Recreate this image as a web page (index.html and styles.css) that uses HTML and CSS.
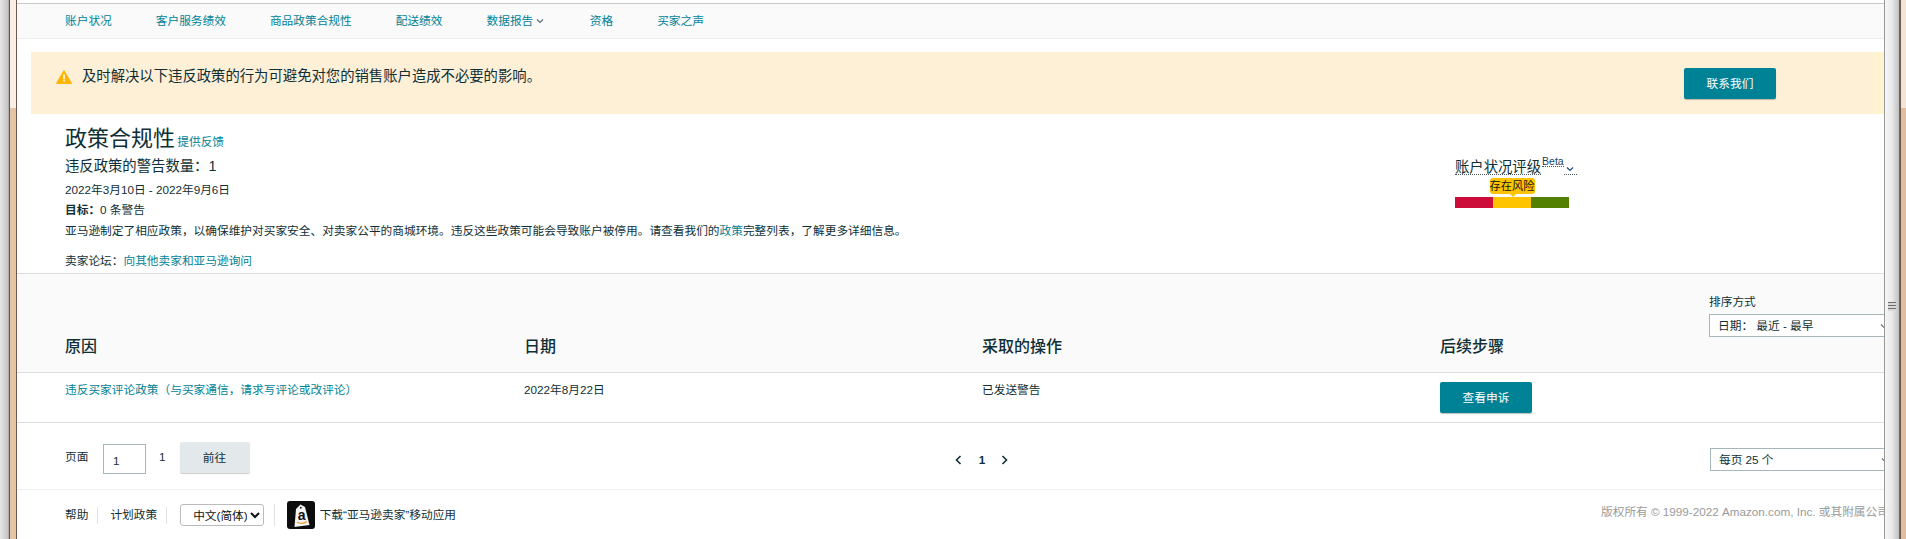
FILE: index.html
```html
<!DOCTYPE html>
<html lang="zh-CN">
<head>
<meta charset="utf-8">
<title>政策合规性</title>
<link rel="stylesheet" href="styles.css">
</head>
<body>
<div class="window">
  <div class="edge-left"><div class="edge-left-tint"></div></div>
  <main class="main">
    <nav class="nav">
      <a class="nav-link">账户状况</a>
      <a class="nav-link">客户服务绩效</a>
      <a class="nav-link">商品政策合规性</a>
      <a class="nav-link">配送绩效</a>
      <a class="nav-link nav-caret-link">数据报告<svg class="nav-caret" width="8" height="6" viewBox="0 0 8 6"><path d="M1 1.5 4 4.5 7 1.5" fill="none" stroke="#5b6f75" stroke-width="1.2"/></svg></a>
      <a class="nav-link">资格</a>
      <a class="nav-link">买家之声</a>
    </nav>

    <section class="banner">
      <svg class="banner-icon" width="16" height="14" viewBox="0 0 16 14"><path d="M8 .6 15.5 13.4H.5Z" fill="#ffb400" stroke="#ffb400" stroke-linejoin="round"/><rect x="7.2" y="4.4" width="1.6" height="5" fill="#fff"/><rect x="7.2" y="10.2" width="1.6" height="1.6" fill="#fff"/></svg>
      <p class="banner-text">及时解决以下违反政策的行为可避免对您的销售账户造成不必要的影响。</p>
      <button class="btn btn-contact">联系我们</button>
    </section>

    <section class="summary">
      <div class="summary-left">
        <div class="title-line"><h1 class="title">政策合规性</h1> <a class="link">提供反馈</a></div>
        <p class="count">违反政策的警告数量：1</p>
        <p class="date-range">2022年3月10日 - 2022年9月6日</p>
        <p class="goal"><b>目标：</b>0 条警告</p>
        <p class="desc">亚马逊制定了相应政策，以确保维护对买家安全、对卖家公平的商城环境。违反这些政策可能会导致账户被停用。请查看我们的<a class="link">政策</a>完整列表，了解更多详细信息。</p>
        <p class="forum">卖家论坛：<a class="link">向其他卖家和亚马逊询问</a></p>
      </div>
      <div class="health">
        <div class="health-title"><span class="health-name">账户状况评级</span><sup class="health-beta">Beta</sup><span class="health-more"><svg width="8" height="6" viewBox="0 0 8 6"><path d="M1 1.5 4 4.5 7 1.5" fill="none" stroke="#1f4e79" stroke-width="1.2"/></svg></span></div>
        <div class="health-tag-row"><span class="health-tag">存在风险</span></div>
        <div class="health-bar"><i class="seg seg-red"></i><i class="seg seg-amber"></i><i class="seg seg-green"></i></div>
      </div>
    </section>

    <section class="table-head cols">
      <h2 class="th">原因</h2>
      <h2 class="th">日期</h2>
      <h2 class="th">采取的操作</h2>
      <h2 class="th">后续步骤</h2>
      <div class="sort">
        <div class="sort-label">排序方式</div>
        <div class="fake-select"><span>日期： 最近 - 最早</span><svg width="8" height="6" viewBox="0 0 8 6"><path d="M1 1.5 4 4.5 7 1.5" fill="none" stroke="#5b6f75" stroke-width="1.2"/></svg></div>
      </div>
    </section>

    <section class="table-row cols">
      <a class="link cell">违反买家评论政策（与买家通信，请求写评论或改评论）</a>
      <div class="cell">2022年8月22日</div>
      <div class="cell">已发送警告</div>
      <div><button class="btn btn-appeal">查看申诉</button></div>
    </section>

    <section class="pager">
      <div class="pager-left">
        <span>页面</span>
        <span class="page-input">1</span>
        <span class="page-total">1</span>
        <button class="btn-go">前往</button>
      </div>
      <div class="pager-mid">
        <svg width="7" height="10" viewBox="0 0 7 10"><path d="M5.5 1 1.5 5 5.5 9" fill="none" stroke="#0f2f36" stroke-width="1.6"/></svg>
        <b class="page-current">1</b>
        <svg width="7" height="10" viewBox="0 0 7 10"><path d="M1.5 1 5.5 5 1.5 9" fill="none" stroke="#0f2f36" stroke-width="1.6"/></svg>
      </div>
      <div class="fake-select fake-select-page"><span>每页 25 个</span><svg width="8" height="6" viewBox="0 0 8 6"><path d="M1 1.5 4 4.5 7 1.5" fill="none" stroke="#5b6f75" stroke-width="1.2"/></svg></div>
    </section>

    <footer class="footer">
      <div class="footer-left">
        <span class="foot-item">帮助</span>
        <span class="foot-item">计划政策</span>
        <span class="foot-item foot-select"><select class="lang"><option>中文(简体)</option></select></span>
        <svg class="app-icon" width="28" height="28" viewBox="0 0 28 28"><rect width="28" height="28" rx="3" fill="#0c0c0c"/><path d="M9 8 13.5 3.5 18 6 22.5 24 7.5 26Z" fill="#f4f4f4"/><circle cx="13.8" cy="6.8" r="1" fill="#222"/><text class="app-letter" x="14.6" y="18.5">a</text><path d="M10 21Q15 24 20 20.5" fill="none" stroke="#f29a1f" stroke-width="1.3"/></svg>
        <span class="app-text">下载“亚马逊卖家”移动应用</span>
      </div>
      <div class="copyright">版权所有 © 1999-2022 Amazon.com, Inc. 或其附属公司</div>
    </footer>
  </main>
  <div class="edge-right">
    <div class="scrollbar"><div class="grip"></div></div>
    <div class="edge-right-tint"></div>
  </div>
</div>
</body>
</html>
```

FILE: styles.css
```css
* { box-sizing: border-box; }
html, body { margin: 0; height: 100%; overflow: hidden; background: #fff; }
body { font: 11.7px/16px "Liberation Sans", "Noto Sans CJK SC", sans-serif; color: #0f2f36; }
p, h1, h2 { margin: 0; }
a { color: inherit; text-decoration: none; }

.window { display: flex; width: 1906px; height: 539px; }

.edge-left { flex: 0 0 17px; padding-left: 9px; background: linear-gradient(90deg, #e8e8e8, #c4c4c4 8px, #9a9a9a 9px); }
.edge-left-tint { height: 100%; border-left: 1px solid #5a5a5a; border-right: 1px solid #6b5a50; background: linear-gradient(180deg, #fbeee2 108px, #e5c3a5 108px); }

.edge-right { flex: 0 0 22px; display: flex; border-left: 1px solid #999; }
.scrollbar { flex: 0 0 15px; padding: 302px 3px 0 3px; background: linear-gradient(90deg, #f6f6f6, #e9e9e9 7px, #c6c6c6 13px, #bdbdbd); border-right: 1px solid #666; }
.grip { height: 9px; background: repeating-linear-gradient(180deg, #6d6d6d 0 1px, #d8d8d8 1px 3px); }
.edge-right-tint { flex: 1; border-left: 1px solid #6b5a50; background: linear-gradient(180deg, #f3e4d6 108px, #e0bda0 108px); }

.main { flex: 0 0 1867px; width: 1867px; padding-top: 3px; overflow: hidden; }

.nav { display: flex; gap: 44px; align-items: center; height: 36px; padding-left: 48px; background: #fafafa; border-top: 1px solid #c8c8c8; border-bottom: 1px solid #eee; }
.nav-link { color: #008296; display: flex; align-items: center; white-space: nowrap; }
.nav-caret { margin-left: 3px; margin-right: 1.5px; }

.banner { display: flex; align-items: flex-start; height: 62px; margin: 13px 0 0 14px; padding: 16px 108px 0 25px; background: linear-gradient(90deg, #fef0d6 calc(100% - 10px), #fff3d0 0); }
.banner-icon { margin-top: 2px; flex: none; }
.banner-text { flex: 1; margin: -1px 0 0 10px; font-size: 14.35px; line-height: 18px; }

.btn { border: 0; border-radius: 2px; background: #008296; color: #fff; font: inherit; width: 92px; padding: 0; box-shadow: 0 1px 1px rgba(0, 0, 0, .25); }
.btn-contact { height: 31px; }
.btn-appeal { height: 31px; margin-top: 9px; }

.summary { display: flex; height: 160px; padding-left: 48px; border-bottom: 1px solid #ddd; }
.summary-left { flex: 0 0 1390px; padding-top: 10px; }
.title-line { height: 30px; line-height: 30px; white-space: nowrap; }
.title { display: inline; margin-right: -1px; font-size: 22px; font-weight: 400; }
.link { color: #008296; }
.count { margin-top: 2px; font-size: 14.35px; line-height: 20px; }
.date-range { margin-top: 6px; }
.goal { margin-top: 4px; }
.desc { margin-top: 5px; }
.forum { margin-top: 14px; }

.health { flex: none; padding-top: 45px; }
.health-title { display: flex; align-items: flex-start; height: 16px; font-size: 14.35px; line-height: 16px; white-space: nowrap; }
.health-name { border-bottom: 1px dotted #4a5a60; height: 16px; }
.health-beta { font-size: 10.5px; line-height: 11px; margin: -3px 0 0 1px; height: 11px; border-bottom: 1px dotted #4a5a60; color: #17405c; }
.health-more { width: 13px; height: 16px; border-bottom: 1px dotted #4a5a60; display: flex; align-items: center; justify-content: center; padding-top: 5px; }
.health-tag-row { display: flex; justify-content: center; width: 114px; margin-top: 3px; }
.health-tag { position: relative; width: 45px; height: 16px; border-radius: 3px; background: #ffc400; color: #111; font-size: 11.25px; text-align: center; white-space: nowrap; }
.health-tag::after { content: ""; position: absolute; left: 19px; bottom: -3px; border: 4px solid transparent; border-bottom: 0; border-top-color: #ffc400; }
.health-bar { display: flex; width: 114px; height: 11px; margin-top: 3px; }
.seg { flex: 1; }
.seg-red { background: #cc0c39; }
.seg-amber { background: #ffc400; }
.seg-green { background: #538000; }

.cols { display: grid; grid-template-columns: 459px 458px 458px 269px 190px; padding-left: 48px; width: 2000px; }
.table-head { height: 99px; background: #fafafa; border-bottom: 1px solid #ddd; align-items: end; }
.th { font-size: 16px; font-weight: 500; line-height: 24px; padding-bottom: 13px; }
.sort { align-self: start; padding-top: 20px; }
.sort-label { white-space: nowrap; }
.fake-select { display: flex; flex: none; align-items: center; justify-content: space-between; height: 23px; width: 190px; margin-top: 4px; padding: 0 10px 0 8px; background: #fff; border: 1px solid #a6b7ba; white-space: nowrap; }

.table-row { height: 50px; border-bottom: 1px solid #ddd; }
.cell { padding-top: 9px; white-space: nowrap; }

.pager { display: flex; height: 67px; border-bottom: 1px solid #eee; padding-left: 48px; }
.pager-left { display: flex; flex: 0 0 890px; align-items: flex-start; padding-top: 26px; }
.page-input { width: 43px; height: 30px; margin: -5px 0 0 14.6px; padding: 8px 0 0 9px; border: 1px solid #a6b7ba; }
.page-total { margin-left: 13px; }
.btn-go { width: 70px; height: 31px; margin: -7px 0 0 14px; padding: 0; border: 0; border-radius: 2px; background: #e3e9eb; color: inherit; font: inherit; box-shadow: 0 1px 1px rgba(0, 0, 0, .2); }
.pager-mid { display: flex; flex: 0 0 755px; align-items: center; height: 16px; margin-top: 29px; }
.page-current { margin: 0 16px 0 16.7px; }
.fake-select-page { margin-top: 25px; }

.footer { display: flex; height: 50px; padding-left: 48px; }
.footer-left { display: flex; flex: 0 0 1536px; align-items: center; height: 50px; }
.foot-item { display: flex; align-items: center; height: 17px; padding-right: 9px; margin-right: 12px; border-right: 1px solid #e2e2e2; }
.foot-select { height: 22px; padding-right: 9.5px; margin-right: 12.5px; margin-left: 1px; }
.lang { width: 84px; height: 22px; font: inherit; color: #111; background: #fff; border: 1px solid #bbb; border-radius: 3px; padding-left: 8px; }
.app-icon { flex: none; }
.app-letter { font: 700 14px "Liberation Sans", sans-serif; fill: #111; text-anchor: middle; }
.app-text { margin-left: 4.5px; white-space: nowrap; }
.copyright { white-space: nowrap; color: #9a9a9a; margin-top: 14px; }
```
